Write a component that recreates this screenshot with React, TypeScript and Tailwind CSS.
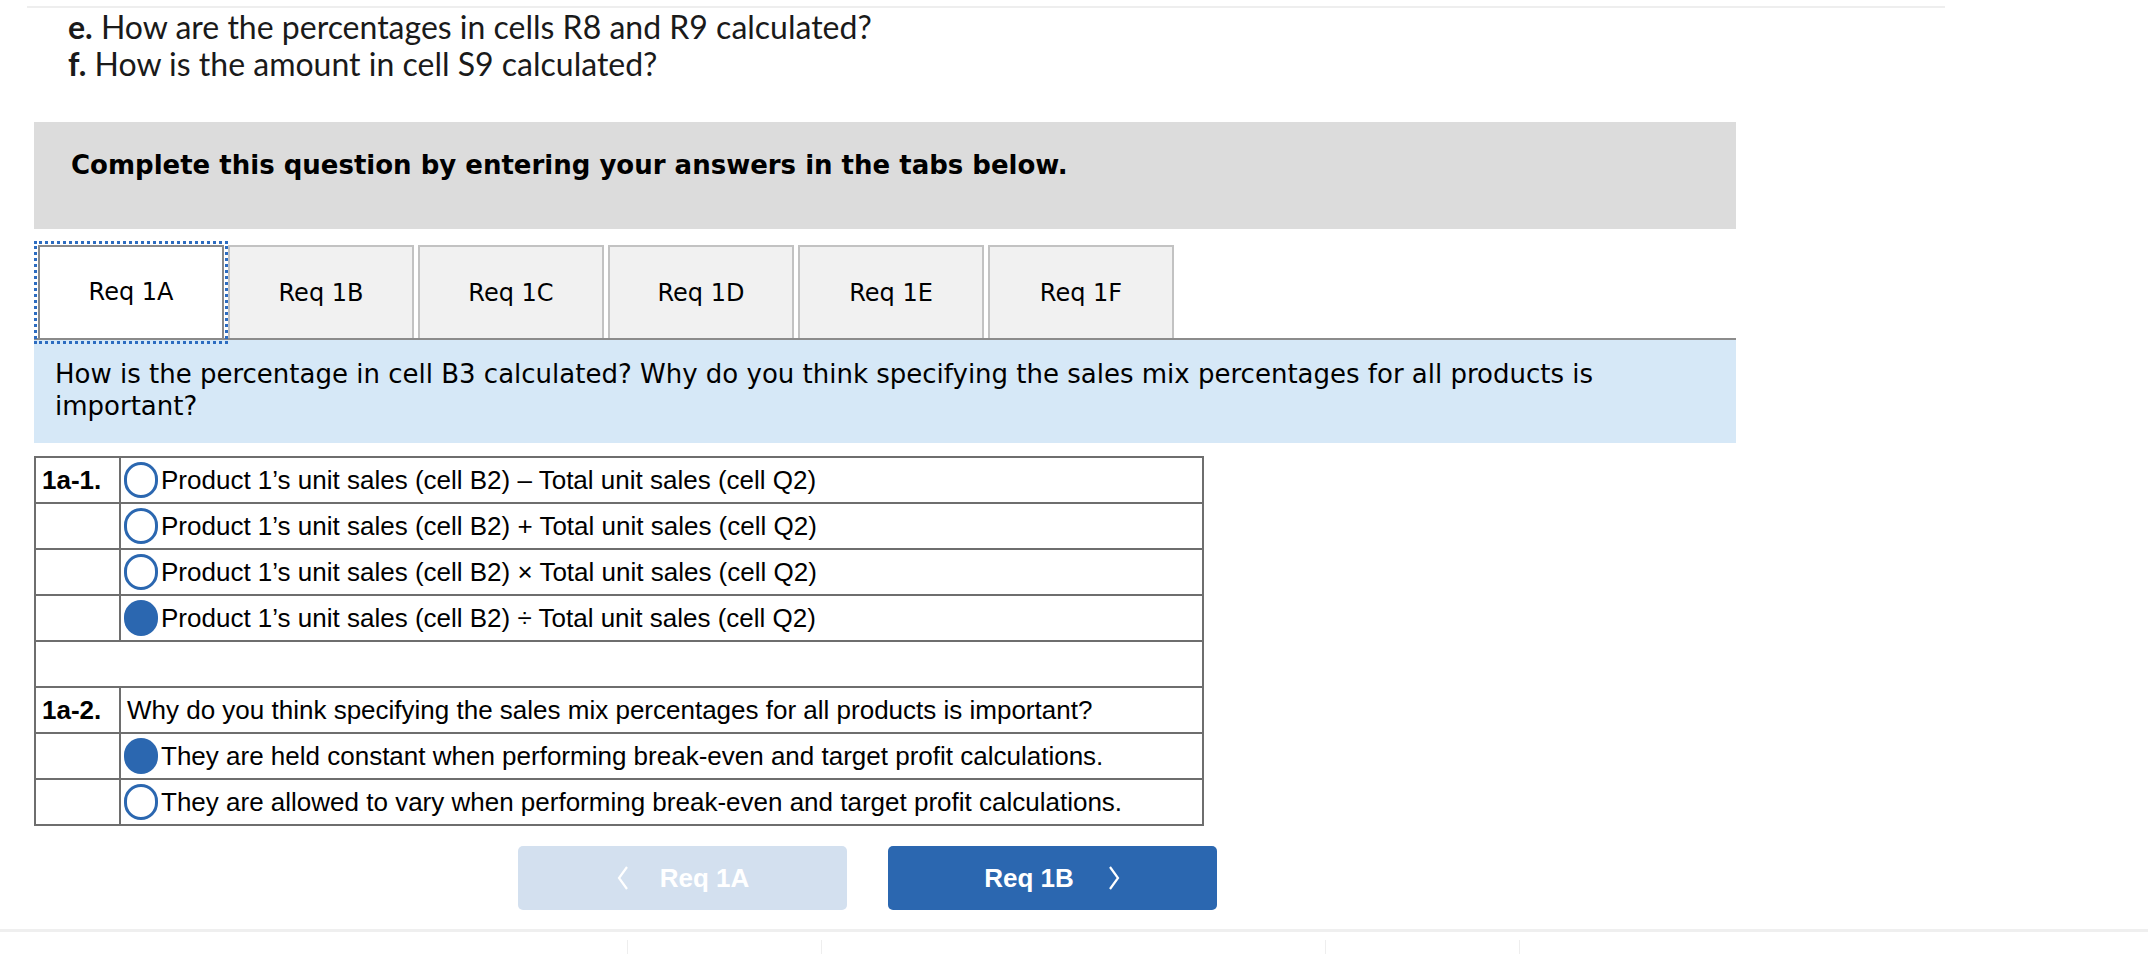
import React from "react";

const tabs = ["Req 1A", "Req 1B", "Req 1C", "Req 1D", "Req 1E", "Req 1F"];

function Radio({ filled }: { filled: boolean }) {
  return (
    <span
      className={
        filled
          ? "inline-block w-[34px] h-[36px] rounded-full bg-[#2b67b0] shrink-0"
          : "inline-block w-[34px] h-[36px] rounded-full border-[3px] border-[#2b67b0] bg-white shrink-0"
      }
    />
  );
}

function Chevron({ dir }: { dir: "left" | "right" }) {
  return (
    <svg width="14" height="26" viewBox="0 0 14 26" className="shrink-0">
      {dir === "left" ? (
        <polyline points="11,2 3,13 11,24" fill="none" stroke="white" strokeWidth="2.2" />
      ) : (
        <polyline points="3,2 11,13 3,24" fill="none" stroke="white" strokeWidth="2.2" />
      )}
    </svg>
  );
}

type Row =
  | { kind: "radio"; label?: string; text: string; filled: boolean }
  | { kind: "text"; label: string; text: string }
  | { kind: "blank" };

const rows: Row[] = [
  { kind: "radio", label: "1a-1.", text: "Product 1’s unit sales (cell B2) – Total unit sales (cell Q2)", filled: false },
  { kind: "radio", text: "Product 1’s unit sales (cell B2) + Total unit sales (cell Q2)", filled: false },
  { kind: "radio", text: "Product 1’s unit sales (cell B2) × Total unit sales (cell Q2)", filled: false },
  { kind: "radio", text: "Product 1’s unit sales (cell B2) ÷ Total unit sales (cell Q2)", filled: true },
  { kind: "blank" },
  { kind: "text", label: "1a-2.", text: "Why do you think specifying the sales mix percentages for all products is important?" },
  { kind: "radio", text: "They are held constant when performing break-even and target profit calculations.", filled: true },
  { kind: "radio", text: "They are allowed to vary when performing break-even and target profit calculations.", filled: false },
];

export default function App() {
  return (
    <div className="relative w-[2148px] h-[954px] overflow-hidden bg-white text-black">
      {/* top rule */}
      <div className="ml-[27px] mt-[6px] w-[1918px] h-[2px] bg-[#eeeeee]" />

      {/* question lines */}
      <div className="pl-[68px] text-[32px] leading-[37px] text-[#1a1a1a] font-['Lato','Open_Sans',sans-serif]">
        <div>
          <span className="font-bold">e.</span> How are the percentages in cells R8 and R9 calculated?
        </div>
        <div>
          <span className="font-bold">f.</span> How is the amount in cell S9 calculated?
        </div>
      </div>

      {/* instruction box */}
      <div className="ml-[34px] mt-[40px] w-[1702px] h-[107px] bg-[#dcdcdc] pl-[37px] pt-[27px]">
        <div className="font-['DejaVu_Sans','Verdana',sans-serif] font-bold text-[26px] leading-[32px]">
          Complete this question by entering your answers in the tabs below.
        </div>
      </div>

      {/* tabs */}
      <div className="ml-[34px] mt-[16px] w-[1702px] flex items-end gap-[4px] pl-[4px] border-b-2 border-[#8c8c8c] font-['DejaVu_Sans','Verdana',sans-serif] text-[24px]">
        {tabs.map((t, i) =>
          i === 0 ? (
            <div
              key={t}
              className="relative z-10 -mb-[2px] w-[186px] h-[95px] bg-white border-2 border-[#8a8a8a] flex items-center justify-center outline-dotted outline-[3px] outline-[#2d6cc0] outline-offset-[1px] pb-[2px]"
            >
              {t}
            </div>
          ) : (
            <div
              key={t}
              className="w-[186px] h-[93px] bg-[#f1f1f1] border-2 border-b-0 border-[#c2c2c2] flex items-center justify-center"
            >
              {t}
            </div>
          )
        )}
      </div>

      {/* question band */}
      <div className="ml-[34px] w-[1702px] h-[103px] bg-[#d6e8f7] pl-[21px] pt-[18px] font-['DejaVu_Sans','Verdana',sans-serif] text-[26px] leading-[32px]">
        How is the percentage in cell B3 calculated? Why do you think specifying the sales mix percentages for all products is
        <br />
        important?
      </div>

      {/* answer table */}
      <table className="ml-[34px] mt-[13px] w-[1170px] border-collapse border-2 border-[#6e6e6e] font-['Liberation_Sans','Arial',sans-serif] text-[26px]">
        <tbody>
          {rows.map((r, i) => {
            if (r.kind === "blank") {
              return (
                <tr key={i} className="h-[46px]">
                  <td colSpan={2} className="border-2 border-[#6e6e6e]" />
                </tr>
              );
            }
            return (
              <tr key={i} className="h-[46px]">
                <td className="w-[85px] border-2 border-[#6e6e6e] pl-[6px] font-bold align-middle leading-[30px]">
                  {r.label ?? ""}
                </td>
                <td className="border-2 border-[#6e6e6e] p-0 align-middle leading-[30px]">
                  {r.kind === "radio" ? (
                    <div className="flex items-center pl-[3px]">
                      <Radio filled={r.filled} />
                      <span className="ml-[3px]">{r.text}</span>
                    </div>
                  ) : (
                    <div className="pl-[6px]">{r.text}</div>
                  )}
                </td>
              </tr>
            );
          })}
        </tbody>
      </table>

      {/* nav buttons */}
      <div className="mt-[20px] ml-[518px] flex gap-[41px] font-['Liberation_Sans','Arial',sans-serif] font-bold text-[26px] text-white">
        <div className="w-[329px] h-[64px] rounded-[5px] bg-[#d3e0ef] flex items-center justify-center gap-[30px]">
          <Chevron dir="left" />
          <span>Req 1A</span>
        </div>
        <div className="w-[329px] h-[64px] rounded-[5px] bg-[#2b67b0] flex items-center justify-center gap-[33px]">
          <span>Req 1B</span>
          <Chevron dir="right" />
        </div>
      </div>

      {/* bottom rule */}
      <div className="mt-[19px] w-full h-[3px] bg-[#efefef]" />
      <div className="relative mt-[8px] h-[20px]">
        <div className="absolute left-[627px] top-0 w-[1px] h-full bg-[#eeeeee]" />
        <div className="absolute left-[821px] top-0 w-[1px] h-full bg-[#eeeeee]" />
        <div className="absolute left-[1325px] top-0 w-[1px] h-full bg-[#eeeeee]" />
        <div className="absolute left-[1519px] top-0 w-[1px] h-full bg-[#eeeeee]" />
      </div>
    </div>
  );
}
